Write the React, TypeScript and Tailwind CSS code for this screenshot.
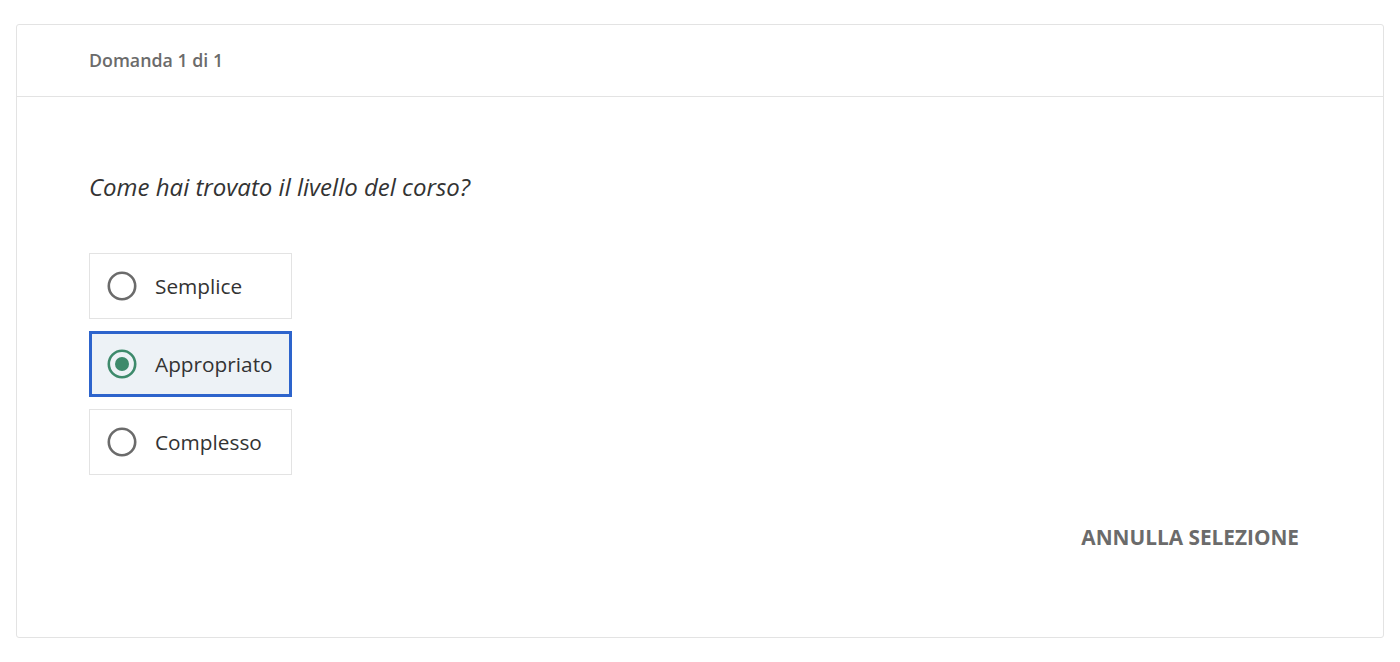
import React from "react";

const options = ["Semplice", "Appropriato", "Complesso"];

function Radio({ checked }: { checked: boolean }) {
  if (checked) {
    return (
      <svg width="30" height="30" viewBox="0 0 30 30">
        <circle cx="15" cy="15" r="13.2" fill="none" stroke="#3d8a6b" strokeWidth="2.6" />
        <circle cx="15" cy="15" r="7" fill="#3d8a6b" />
      </svg>
    );
  }
  return (
    <svg width="30" height="30" viewBox="0 0 30 30">
      <circle cx="15" cy="15" r="13.2" fill="none" stroke="#6b6b6b" strokeWidth="2.6" />
    </svg>
  );
}

export default function App() {
  const selected = 1;
  return (
    <div
      className="w-[1400px] h-[662px] bg-white pt-6 px-4"
      style={{ fontFamily: '"Open Sans", "Noto Sans", sans-serif' }}
    >
      <div className="h-[614px] border border-[#e3e3e3] rounded-[3px] flex flex-col">
        <div className="h-[72px] border-b border-[#e3e3e3] flex items-center pl-[72px]">
          <span className="text-[17.8px] font-semibold text-[#6b6b6b] leading-none">Domanda 1 di 1</span>
        </div>
        <div className="flex-1 flex flex-col pl-[72px] pr-[84px]">
          <p className="mt-[75px] text-[24px] italic text-[#333] leading-[30px]">
            Come hai trovato il livello del corso?
          </p>
          <div className="mt-[51px] flex flex-col gap-3">
            {options.map((o, i) => {
              const isSel = i === selected;
              return (
                <div
                  key={o}
                  className={
                    isSel
                      ? "w-[203px] h-[66px] border-[3px] border-[#2d64cc] bg-[#edf2f6] flex items-center pl-[15px]"
                      : "w-[203px] h-[66px] border border-[#e3e3e3] bg-white flex items-center pl-[17px]"
                  }
                >
                  <Radio checked={isSel} />
                  <span className="ml-[18px] text-[20.8px] text-[#333] leading-none">{o}</span>
                </div>
              );
            })}
          </div>
          <div className="mt-[50px] flex justify-end">
            <span className="text-[20.8px] font-bold text-[#6b6b6b] leading-[26px] -mt-[1px]">ANNULLA SELEZIONE</span>
          </div>
        </div>
      </div>
    </div>
  );
}
